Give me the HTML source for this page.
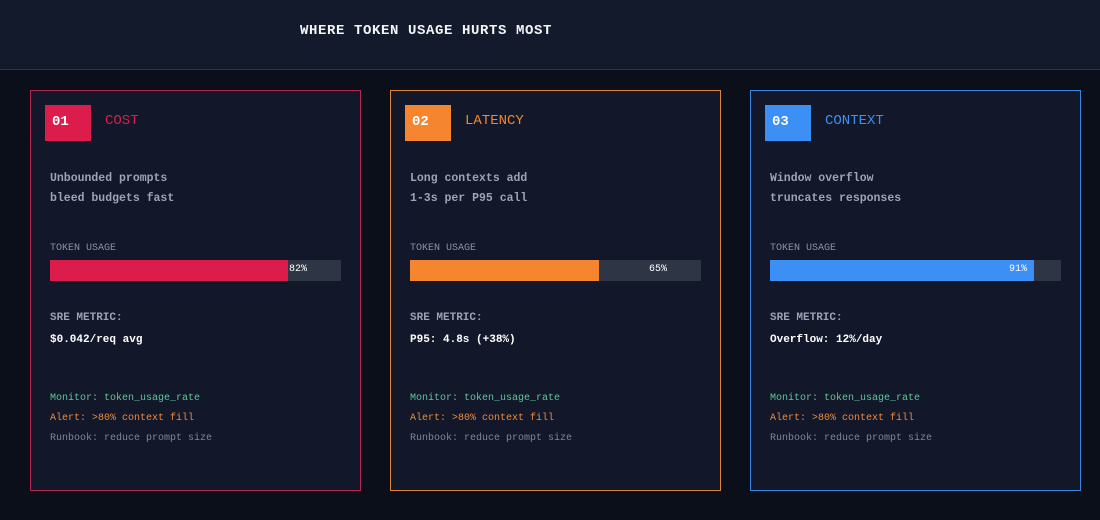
<!DOCTYPE html>
<html><head><style>
*{margin:0;padding:0;box-sizing:border-box}
body{width:1100px;height:520px;background:#0b0f1a;font-family:"Liberation Mono","DejaVu Sans Mono",monospace;overflow:hidden;position:relative}
.hdr{position:absolute;left:0;top:0;width:1100px;height:70px;background:#131a2b;border-bottom:1px solid #2c3444}
.hdr h1{position:absolute;left:300px;top:23px;font-size:14px;font-weight:bold;color:#f3f4f6;letter-spacing:0.6px;white-space:nowrap}
.card{position:absolute;top:90px;width:331px;height:401px;background:#121829;border:1px solid}
.badge{position:absolute;left:14px;top:14px;width:46px;height:36px;color:#fff;font-size:14px;font-weight:bold;padding:9px 0 0 7px}
.lbl{position:absolute;left:74px;top:22px;font-size:14px}
.desc{position:absolute;left:19px;top:78px;font-size:11.5px;font-weight:bold;color:#9ca3b4;line-height:20px}
.tu{position:absolute;left:19px;top:152px;font-size:10px;color:#8b93a3}
.bar{position:absolute;left:19px;top:169px;width:291px;height:21px;background:#2e3646}
.fill{position:absolute;left:0;top:0;height:21px}
.pct{position:absolute;top:4px;font-size:10px;color:#fff}
.sre{position:absolute;left:19px;top:221px;font-size:11px;font-weight:bold;color:#9ca3b4}
.val{position:absolute;left:19px;top:243px;font-size:11px;font-weight:bold;color:#fff}
.m{position:absolute;left:19px;font-size:10px}
</style></head><body>
<div class="hdr"><h1>WHERE TOKEN USAGE HURTS MOST</h1></div>

<div class="card" style="left:30px;border-color:#b5264f">
<div class="badge" style="background:#dc1d4b">01</div><div class="lbl" style="color:#dc1d4b">COST</div>
<div class="desc">Unbounded prompts<br>bleed budgets fast</div>
<div class="tu">TOKEN USAGE</div>
<div class="bar"><div class="fill" style="width:238px;background:#dc1d4b"></div><div class="pct" style="left:239px">82%</div></div>
<div class="sre">SRE METRIC:</div><div class="val">$0.042/req avg</div>
<div class="m" style="top:302px;color:#5fc79a">Monitor: token_usage_rate</div>
<div class="m" style="top:322px;color:#f08a3c">Alert: &gt;80% context fill</div>
<div class="m" style="top:342px;color:#7f8798">Runbook: reduce prompt size</div>
</div>

<div class="card" style="left:390px;border-color:#e0843a">
<div class="badge" style="background:#f5852f">02</div><div class="lbl" style="color:#f5852f">LATENCY</div>
<div class="desc">Long contexts add<br>1-3s per P95 call</div>
<div class="tu">TOKEN USAGE</div>
<div class="bar"><div class="fill" style="width:189px;background:#f5852f"></div><div class="pct" style="left:239px">65%</div></div>
<div class="sre">SRE METRIC:</div><div class="val">P95: 4.8s (+38%)</div>
<div class="m" style="top:302px;color:#5fc79a">Monitor: token_usage_rate</div>
<div class="m" style="top:322px;color:#f08a3c">Alert: &gt;80% context fill</div>
<div class="m" style="top:342px;color:#7f8798">Runbook: reduce prompt size</div>
</div>

<div class="card" style="left:750px;border-color:#3a86e0">
<div class="badge" style="background:#3b8ff5">03</div><div class="lbl" style="color:#3b8ff5">CONTEXT</div>
<div class="desc">Window overflow<br>truncates responses</div>
<div class="tu">TOKEN USAGE</div>
<div class="bar"><div class="fill" style="width:264px;background:#3b8ff5"></div><div class="pct" style="left:239px">91%</div></div>
<div class="sre">SRE METRIC:</div><div class="val">Overflow: 12%/day</div>
<div class="m" style="top:302px;color:#5fc79a">Monitor: token_usage_rate</div>
<div class="m" style="top:322px;color:#f08a3c">Alert: &gt;80% context fill</div>
<div class="m" style="top:342px;color:#7f8798">Runbook: reduce prompt size</div>
</div>
</body></html>
